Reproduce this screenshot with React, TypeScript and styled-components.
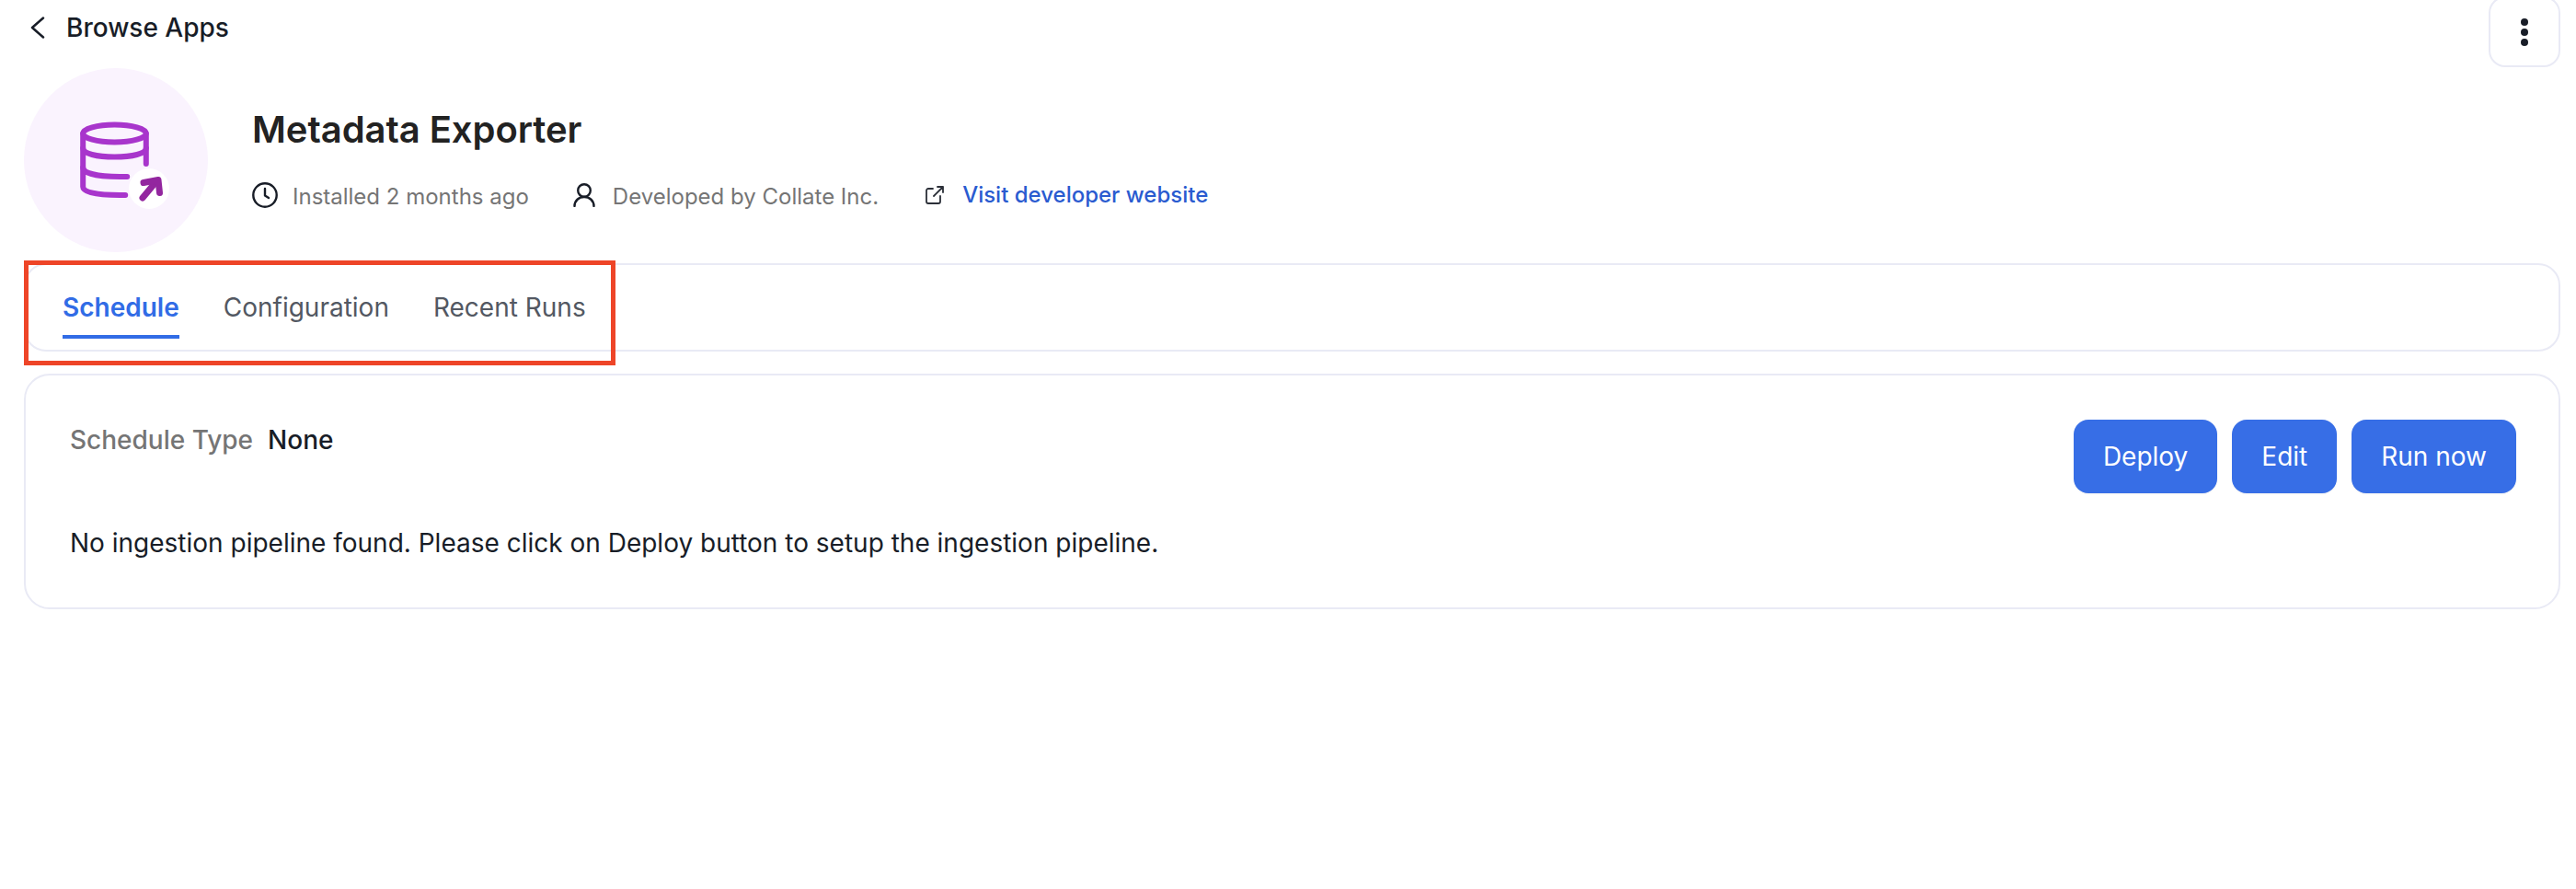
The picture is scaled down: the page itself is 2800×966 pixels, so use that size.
import React from "react";
import styled, { createGlobalStyle } from "styled-components";

const GlobalStyle = createGlobalStyle`
  html, body { margin: 0; padding: 0; background: #fff; }
  body { font-family: Inter, "Liberation Sans", sans-serif; color: #181d27; }
`;

const Page = styled.div`
  width: 2800px;
  height: 966px;
  box-sizing: border-box;
  padding: 0 17px 0 26px;
  overflow: hidden;
`;

const TopBar = styled.div`
  display: flex;
  justify-content: space-between;
  align-items: flex-start;
  height: 74px;
`;

const BackLink = styled.a`
  display: flex;
  align-items: center;
  gap: 23px;
  height: 60px;
  padding-left: 7px;
  font-size: 28px;
  font-weight: 500;
  color: #181d27;
  svg { display: block; }
`;

const KebabButton = styled.button`
  box-sizing: border-box;
  width: 78px;
  height: 77px;
  margin-top: -4px;
  border: 2px solid #e9eaf5;
  border-radius: 18px;
  background: #fff;
  display: flex;
  flex-direction: column;
  align-items: center;
  justify-content: center;
  gap: 3px;
  padding: 0;
`;

const Dot = styled.span`
  width: 8px;
  height: 8px;
  border-radius: 50%;
  background: #181d27;
`;

const Header = styled.div`
  display: flex;
  align-items: center;
  gap: 48px;
  height: 200px;
`;

const Avatar = styled.div`
  width: 200px;
  height: 200px;
  flex: none;
  border-radius: 50%;
  background: #faf3fe;
  svg { display: block; }
`;

const Info = styled.div`
  display: flex;
  flex-direction: column;
  gap: 33px;
  margin-top: -3px;
`;

const Title = styled.h1`
  margin: 0;
  font-size: 40px;
  line-height: 48px;
  font-weight: 600;
  letter-spacing: -0.05px;
  color: #222;
`;

const MetaRow = styled.div`
  display: flex;
  align-items: center;
  height: 30px;
`;

const MetaItem = styled.div<{ $gap: number; $end: number }>`
  display: flex;
  align-items: center;
  gap: ${(p) => p.$gap}px;
  margin-right: ${(p) => p.$end}px;
  svg { display: block; flex: none; margin-top: -3px; }
`;

const MetaText = styled.span`
  font-size: 24px;
  color: #757575;
`;

const MetaLink = styled.a`
  font-size: 24px;
  font-weight: 500;
  color: #2a5bd0;
  position: relative;
  top: -2px;
`;

const TabsCard = styled.div`
  position: relative;
  box-sizing: border-box;
  height: 96px;
  margin-top: 12px;
  border: 2px solid #e9eaf5;
  border-radius: 24px;
  display: flex;
  gap: 48px;
  padding-left: 40px;
`;

const Tab = styled.div<{ $active?: boolean }>`
  position: relative;
  font-size: 28px;
  line-height: 92px;
  font-weight: ${(p) => (p.$active ? 600 : 400)};
  color: ${(p) => (p.$active ? "#316ce6" : "#535862")};
  ${(p) =>
    p.$active &&
    `&::after {
      content: "";
      position: absolute;
      left: 0;
      right: 0;
      top: 76px;
      height: 4px;
      background: #316ce6;
    }`}
`;

const Highlight = styled.div`
  position: absolute;
  left: -2px;
  top: -5px;
  width: 643px;
  height: 114px;
  box-sizing: border-box;
  border: 5px solid #ee4528;
  pointer-events: none;
`;

const ScheduleCard = styled.div`
  box-sizing: border-box;
  height: 256px;
  margin-top: 24px;
  border: 2px solid #e9eaf5;
  border-radius: 28px;
  padding: 48px 46px 0 48px;
`;

const ScheduleHead = styled.div`
  display: flex;
  justify-content: space-between;
  align-items: flex-start;
`;

const Field = styled.div`
  display: flex;
  gap: 16px;
  font-size: 28px;
  line-height: 32px;
  margin-top: 6px;
`;

const FieldLabel = styled.span`
  color: #757575;
  font-weight: 500;
`;

const FieldValue = styled.span`
  color: #181d27;
  font-weight: 500;
`;

const Actions = styled.div`
  display: flex;
  gap: 16px;
`;

const ActionButton = styled.button`
  height: 80px;
  padding: 0 32px;
  border: 0;
  border-radius: 16px;
  background: #376ee6;
  color: #fff;
  font-family: inherit;
  font-size: 28px;
  font-weight: 400;
  box-shadow: 0 1px 2px rgba(10, 13, 18, 0.05);
`;

const Message = styled.p`
  margin: 34px 0 0;
  font-size: 28px;
  line-height: 40px;
  color: #181d27;
`;

const DbIcon = () => (
  <svg width="200" height="200" viewBox="0 0 200 200" fill="none">
    <g stroke="#a835cc" strokeWidth="6" strokeLinecap="round">
      <ellipse cx="98.500" cy="71" rx="34.300" ry="9.500" />
      <path d="M64.200 71v58c0 6 15 9 40 9h6" />
      <path d="M64.200 87c0 6 15 9.500 34.300 9.500s34.300-3.500 34.300-9.500" />
      <path d="M64.200 108c0 6 15 10 40 10h8" />
      <path d="M132.800 71v33" />
    </g>
    <circle cx="136" cy="131" r="22" fill="#fff" />
    <g stroke="#93269f" strokeWidth="7" strokeLinecap="round" strokeLinejoin="round">
      <path d="M129 141l15-18" />
      <path d="M130 124.500l16-3 1.500 14" />
    </g>
  </svg>
);

const Chevron = () => (
  <svg width="16" height="24" viewBox="0 0 16 24" fill="none" stroke="#181d27" strokeWidth="2.500" strokeLinecap="round" strokeLinejoin="round">
    <path d="M14 1.500 2 12l12 10.500" />
  </svg>
);

const Clock = () => (
  <svg width="28" height="28" viewBox="0 0 28 28" fill="none" stroke="#181d27" strokeWidth="2.400" strokeLinecap="round" strokeLinejoin="round">
    <circle cx="14" cy="14" r="12.700" />
    <path d="M14 7v7.500l4 2.500" />
  </svg>
);

const Person = () => (
  <svg width="24" height="26" viewBox="0 0 24 26" fill="none" stroke="#181d27" strokeWidth="2.400" strokeLinecap="round">
    <circle cx="12" cy="8" r="6.800" />
    <path d="M1.500 25c0-6 4.700-10 10.500-10s10.500 4 10.500 10" />
  </svg>
);

const External = () => (
  <svg width="20" height="20" viewBox="0 0 20 20" fill="none" stroke="#2b2f38" strokeWidth="1.800" strokeLinecap="round" strokeLinejoin="round">
    <path d="M8 3H3a2 2 0 0 0-2 2v12a2 2 0 0 0 2 2h11a2 2 0 0 0 2-2v-6" />
    <path d="M9 11 19 1M13 1h6v6" />
  </svg>
);

export default function App() {
  return (
    <Page>
      <GlobalStyle />
      <TopBar>
        <BackLink>
          <Chevron />
          Browse Apps
        </BackLink>
        <KebabButton aria-label="More">
          <Dot />
          <Dot />
          <Dot />
        </KebabButton>
      </TopBar>
      <Header>
        <Avatar>
          <DbIcon />
        </Avatar>
        <Info>
          <Title>Metadata Exporter</Title>
          <MetaRow>
            <MetaItem $gap={16} $end={48}>
              <Clock />
              <MetaText>Installed 2 months ago</MetaText>
            </MetaItem>
            <MetaItem $gap={19} $end={51}>
              <Person />
              <MetaText>Developed by Collate Inc.</MetaText>
            </MetaItem>
            <MetaItem $gap={20} $end={0}>
              <External />
              <MetaLink>Visit developer website</MetaLink>
            </MetaItem>
          </MetaRow>
        </Info>
      </Header>
      <TabsCard>
        <Tab $active>Schedule</Tab>
        <Tab>Configuration</Tab>
        <Tab>Recent Runs</Tab>
        <Highlight />
      </TabsCard>
      <ScheduleCard>
        <ScheduleHead>
          <Field>
            <FieldLabel>Schedule Type</FieldLabel>
            <FieldValue>None</FieldValue>
          </Field>
          <Actions>
            <ActionButton>Deploy</ActionButton>
            <ActionButton>Edit</ActionButton>
            <ActionButton>Run now</ActionButton>
          </Actions>
        </ScheduleHead>
        <Message>No ingestion pipeline found. Please click on Deploy button to setup the ingestion pipeline.</Message>
      </ScheduleCard>
    </Page>
  );
}
